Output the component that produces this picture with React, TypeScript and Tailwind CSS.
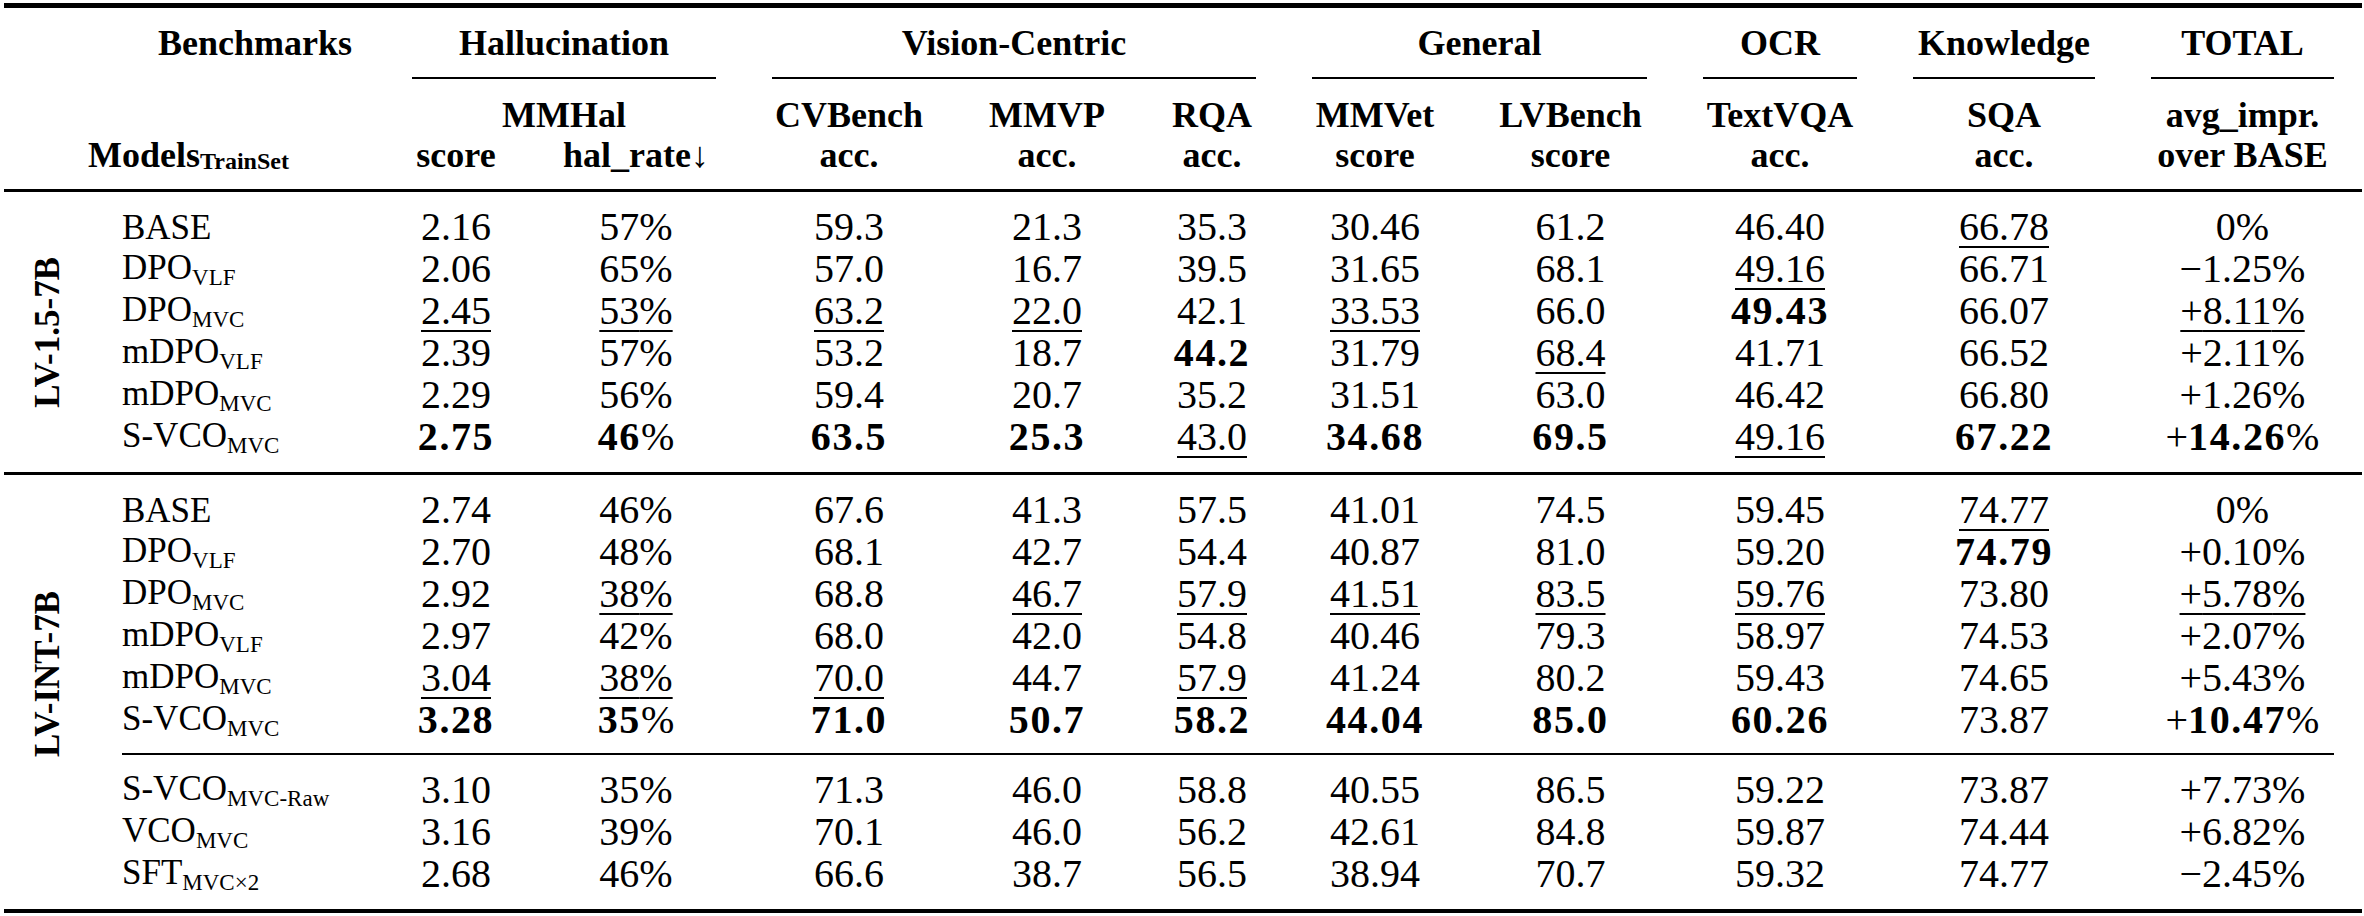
import React from 'react';

const HEAD = 'grid grid-cols-[96px_284px_144px_216px_210px_186px_144px_182px_209px_210px_238px_239px]';
const BODY = 'grid grid-cols-[284px_144px_216px_210px_186px_144px_182px_209px_210px_238px_239px]';

type Row = { name: string; sub: string; vals: string[] };

// "**" = bold, "_" = underlined
const group1: Row[] = [
  { name: 'BASE', sub: '', vals: ['2.16', '57%', '59.3', '21.3', '35.3', '30.46', '61.2', '46.40', '_66.78', '0%'] },
  { name: 'DPO', sub: 'VLF', vals: ['2.06', '65%', '57.0', '16.7', '39.5', '31.65', '68.1', '_49.16', '66.71', '\u22121.25%'] },
  { name: 'DPO', sub: 'MVC', vals: ['_2.45', '_53%', '_63.2', '_22.0', '42.1', '_33.53', '66.0', '**49.43', '66.07', '_+8.11%'] },
  { name: 'mDPO', sub: 'VLF', vals: ['2.39', '57%', '53.2', '18.7', '**44.2', '31.79', '_68.4', '41.71', '66.52', '+2.11%'] },
  { name: 'mDPO', sub: 'MVC', vals: ['2.29', '56%', '59.4', '20.7', '35.2', '31.51', '63.0', '46.42', '66.80', '+1.26%'] },
  { name: 'S-VCO', sub: 'MVC', vals: ['**2.75', '**46%', '**63.5', '**25.3', '_43.0', '**34.68', '**69.5', '_49.16', '**67.22', '**+14.26%'] },
];

const group2: Row[] = [
  { name: 'BASE', sub: '', vals: ['2.74', '46%', '67.6', '41.3', '57.5', '41.01', '74.5', '59.45', '_74.77', '0%'] },
  { name: 'DPO', sub: 'VLF', vals: ['2.70', '48%', '68.1', '42.7', '54.4', '40.87', '81.0', '59.20', '**74.79', '+0.10%'] },
  { name: 'DPO', sub: 'MVC', vals: ['2.92', '_38%', '68.8', '_46.7', '_57.9', '_41.51', '_83.5', '_59.76', '73.80', '_+5.78%'] },
  { name: 'mDPO', sub: 'VLF', vals: ['2.97', '42%', '68.0', '42.0', '54.8', '40.46', '79.3', '58.97', '74.53', '+2.07%'] },
  { name: 'mDPO', sub: 'MVC', vals: ['_3.04', '_38%', '_70.0', '44.7', '_57.9', '41.24', '80.2', '59.43', '74.65', '+5.43%'] },
  { name: 'S-VCO', sub: 'MVC', vals: ['**3.28', '**35%', '**71.0', '**50.7', '**58.2', '**44.04', '**85.0', '**60.26', '73.87', '**+10.47%'] },
];

const group2b: Row[] = [
  { name: 'S-VCO', sub: 'MVC-Raw', vals: ['3.10', '35%', '71.3', '46.0', '58.8', '40.55', '86.5', '59.22', '73.87', '+7.73%'] },
  { name: 'VCO', sub: 'MVC', vals: ['3.16', '39%', '70.1', '46.0', '56.2', '42.61', '84.8', '59.87', '74.44', '+6.82%'] },
  { name: 'SFT', sub: 'MVC\u00d72', vals: ['2.68', '46%', '66.6', '38.7', '56.5', '38.94', '70.7', '59.32', '74.77', '\u22122.45%'] },
];

function Num({ raw }: { raw: string }) {
  let s = raw;
  const bold = s.startsWith('**');
  if (bold) s = s.slice(2);
  const under = s.startsWith('_');
  if (under) s = s.slice(1);
  const m = s.match(/^([+\u2212]?)([\d.]+)(%?)$/);
  const sign = m ? m[1] : '';
  const digits = m ? m[2] : s;
  const pct = m ? m[3] : '';
  return (
    <span className={under ? 'underline decoration-[1.5px] underline-offset-[6px]' : ''}>
      {sign}
      <span className={bold ? 'font-bold tracking-[0.04em]' : ''}>{digits}</span>
      {pct}
    </span>
  );
}

function DataRow({ row }: { row: Row }) {
  return (
    <div className={`${BODY} h-[42px] items-center`}>
      <div className="pl-[22px] text-[35px] leading-none whitespace-nowrap">
        {row.name}
        {row.sub && <span className="text-[23px] align-[-6px]">{row.sub}</span>}
      </div>
      {row.vals.map((v, i) => (
        <div key={i} className="text-center text-[40px] leading-none whitespace-nowrap">
          <Num raw={v} />
        </div>
      ))}
    </div>
  );
}

function Group({ label, children, shift }: { label: string; children: React.ReactNode; shift?: boolean }) {
  return (
    <div className="flex py-[14px]">
      <div className={`w-[96px] flex items-center justify-center pr-[10px] ${shift ? 'pb-[36px]' : ''}`}>
        <span className="[writing-mode:vertical-rl] rotate-180 font-bold text-[35px] leading-none whitespace-nowrap">
          {label}
        </span>
      </div>
      <div className="flex flex-col">{children}</div>
    </div>
  );
}

function TopHead({ text, span }: { text: string; span: string }) {
  return (
    <div className={`${span} flex flex-col items-stretch`}>
      <div className="h-[69px] flex items-center justify-center">{text}</div>
      <div className="mx-[28px] h-[2px] bg-black" />
    </div>
  );
}

export default function App() {
  return (
    <div className="w-[2364px] h-[916px] bg-white text-black font-['Liberation_Serif',serif] overflow-hidden">
      <div className="ml-[4px] w-[2358px] pt-[3px]">
        <div className="h-[5px] bg-black" />

        {/* header */}
        <div className={`${HEAD} font-bold text-[36px] leading-none`}>
          <div className="col-span-2 h-[69px] flex items-center justify-end pr-[32px]">Benchmarks</div>
          <TopHead text="Hallucination" span="col-span-2" />
          <TopHead text="Vision-Centric" span="col-span-3" />
          <TopHead text="General" span="col-span-2" />
          <TopHead text="OCR" span="col-span-1" />
          <TopHead text="Knowledge" span="col-span-1" />
          <TopHead text="TOTAL" span="col-span-1" />
        </div>
        <div className={`${HEAD} font-bold text-[36px] leading-none pt-[16px] pb-[14px] text-center`}>
          <div className="col-span-2" />
          <div className="col-span-2 h-[40px] flex items-center justify-center">MMHal</div>
          <div className="h-[40px] flex items-center justify-center">CVBench</div>
          <div className="h-[40px] flex items-center justify-center">MMVP</div>
          <div className="h-[40px] flex items-center justify-center">RQA</div>
          <div className="h-[40px] flex items-center justify-center">MMVet</div>
          <div className="h-[40px] flex items-center justify-center">LVBench</div>
          <div className="h-[40px] flex items-center justify-center">TextVQA</div>
          <div className="h-[40px] flex items-center justify-center">SQA</div>
          <div className="h-[40px] flex items-center justify-center">avg_impr.</div>

          <div className="col-span-2 h-[40px] flex items-center pl-[84px] whitespace-nowrap">
            Models<span className="text-[24px] align-[-8px] relative top-[6px]">TrainSet</span>
          </div>
          <div className="h-[40px] flex items-center justify-center">score</div>
          <div className="h-[40px] flex items-center justify-center">hal_rate↓</div>
          <div className="h-[40px] flex items-center justify-center">acc.</div>
          <div className="h-[40px] flex items-center justify-center">acc.</div>
          <div className="h-[40px] flex items-center justify-center">acc.</div>
          <div className="h-[40px] flex items-center justify-center">score</div>
          <div className="h-[40px] flex items-center justify-center">score</div>
          <div className="h-[40px] flex items-center justify-center">acc.</div>
          <div className="h-[40px] flex items-center justify-center">acc.</div>
          <div className="h-[40px] flex items-center justify-center whitespace-nowrap">over BASE</div>
        </div>
        <div className="h-[3px] bg-black" />

        <Group label="LV-1.5-7B">
          {group1.map((r, i) => (
            <DataRow key={i} row={r} />
          ))}
        </Group>
        <div className="h-[3px] bg-black" />

        <Group label="LV-INT-7B" shift>
          {group2.map((r, i) => (
            <DataRow key={i} row={r} />
          ))}
          <div className="ml-[22px] mr-[28px] mt-[12px] mb-[14px] h-[2px] bg-black" />
          {group2b.map((r, i) => (
            <DataRow key={i} row={r} />
          ))}
        </Group>
        <div className="h-[4px] bg-black" />
      </div>
    </div>
  );
}
